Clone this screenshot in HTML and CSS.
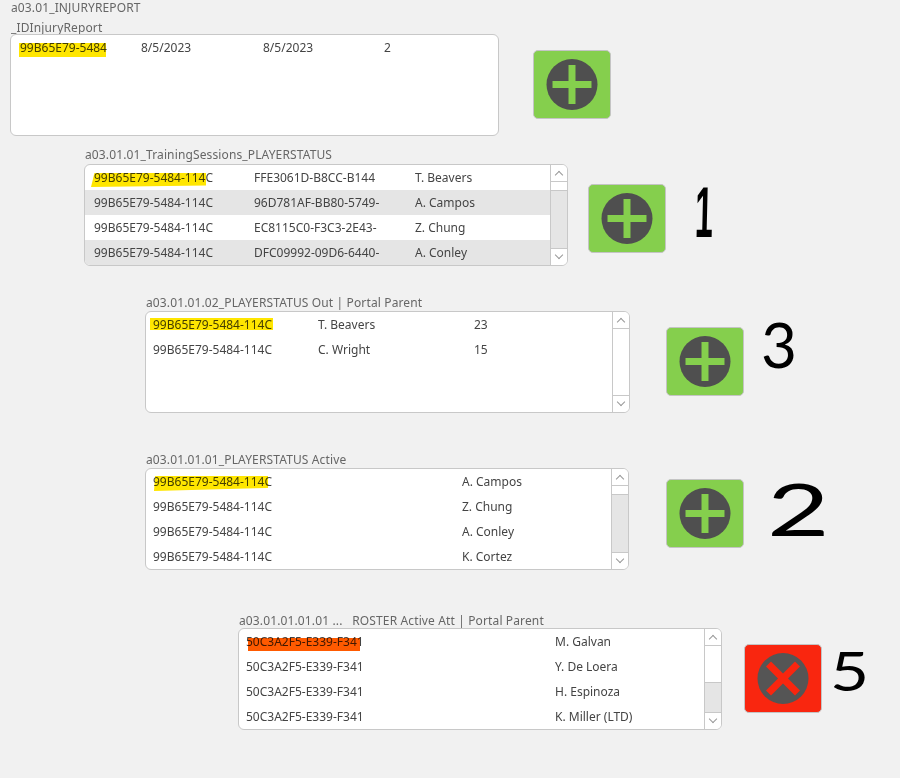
FILE: index.html
```html
<!DOCTYPE html>
<html lang="en">
<head>
    <meta charset="UTF-8">
    <title>a03.01_INJURYREPORT</title>
    <link rel="stylesheet" href="styles.css">
</head>
<body>

<section class="block block-report">
    <div class="label title">a03.01_INJURYREPORT</div>
    <div class="label">_IDInjuryReport</div>
    <div class="row">
        <div class="portal">
            <div class="rows cols-report">
                <div class="line">
                    <span class="cell"><i class="ink ink-report"></i>99B65E79-5484</span>
                    <span class="cell">8/5/2023</span>
                    <span class="cell">8/5/2023</span>
                    <span class="cell">2</span>
                </div>
            </div>
        </div>
        <button class="action add">
            <svg viewBox="0 0 78 69" width="78" height="69"><circle cx="39" cy="34.500" r="25.500" fill="#4f4f4f"/><path d="M35.500 15h7v16h16v7h-16v16h-7v-16h-16v-7h16z" fill="#85cf4d"/></svg>
        </button>
    </div>
</section>

<section class="block block-training">
    <div class="label">a03.01.01_TrainingSessions_PLAYERSTATUS</div>
    <div class="row">
        <div class="portal">
            <div class="rows cols-training striped">
                <div class="line">
                    <span class="cell"><i class="ink ink-training"></i>99B65E79-5484-114C</span>
                    <span class="cell">FFE3061D-B8CC-B144</span>
                    <span class="cell">T. Beavers</span>
                </div>
                <div class="line">
                    <span class="cell">99B65E79-5484-114C</span>
                    <span class="cell">96D781AF-BB80-5749-</span>
                    <span class="cell">A. Campos</span>
                </div>
                <div class="line">
                    <span class="cell">99B65E79-5484-114C</span>
                    <span class="cell">EC8115C0-F3C3-2E43-</span>
                    <span class="cell">Z. Chung</span>
                </div>
                <div class="line">
                    <span class="cell">99B65E79-5484-114C</span>
                    <span class="cell">DFC09992-09D6-6440-</span>
                    <span class="cell">A. Conley</span>
                </div>
            </div>
            <div class="scrollbar">
                <div class="arrow up"></div>
                <div class="thumb thumb-top"></div>
                <div class="track"></div>
                <div class="arrow down"></div>
            </div>
        </div>
        <button class="action add">
            <svg viewBox="0 0 78 69" width="78" height="69"><circle cx="39" cy="34.500" r="25.500" fill="#4f4f4f"/><path d="M35.500 15h7v16h16v7h-16v16h-7v-16h-16v-7h16z" fill="#85cf4d"/></svg>
        </button>
        <span class="note note-1">1</span>
    </div>
</section>

<section class="block block-out">
    <div class="label">a03.01.01.02_PLAYERSTATUS Out | Portal Parent</div>
    <div class="row">
        <div class="portal">
            <div class="rows cols-out">
                <div class="line">
                    <span class="cell"><i class="ink ink-out"></i>99B65E79-5484-114C</span>
                    <span class="cell">T. Beavers</span>
                    <span class="cell">23</span>
                </div>
                <div class="line">
                    <span class="cell">99B65E79-5484-114C</span>
                    <span class="cell">C. Wright</span>
                    <span class="cell">15</span>
                </div>
            </div>
            <div class="scrollbar">
                <div class="arrow up"></div>
                <div class="thumb thumb-fill"></div>
                <div class="arrow down"></div>
            </div>
        </div>
        <button class="action add">
            <svg viewBox="0 0 78 69" width="78" height="69"><circle cx="39" cy="34.500" r="25.500" fill="#4f4f4f"/><path d="M35.500 15h7v16h16v7h-16v16h-7v-16h-16v-7h16z" fill="#85cf4d"/></svg>
        </button>
        <span class="note note-3">3</span>
    </div>
</section>

<section class="block block-active">
    <div class="label">a03.01.01.01_PLAYERSTATUS Active</div>
    <div class="row">
        <div class="portal">
            <div class="rows cols-active">
                <div class="line">
                    <span class="cell"><i class="ink ink-active"></i>99B65E79-5484-114C</span>
                    <span class="cell">A. Campos</span>
                </div>
                <div class="line">
                    <span class="cell">99B65E79-5484-114C</span>
                    <span class="cell">Z. Chung</span>
                </div>
                <div class="line">
                    <span class="cell">99B65E79-5484-114C</span>
                    <span class="cell">A. Conley</span>
                </div>
                <div class="line">
                    <span class="cell">99B65E79-5484-114C</span>
                    <span class="cell">K. Cortez</span>
                </div>
            </div>
            <div class="scrollbar">
                <div class="arrow up"></div>
                <div class="thumb thumb-top"></div>
                <div class="track"></div>
                <div class="arrow down"></div>
            </div>
        </div>
        <button class="action add">
            <svg viewBox="0 0 78 69" width="78" height="69"><circle cx="39" cy="34.500" r="25.500" fill="#4f4f4f"/><path d="M35.500 15h7v16h16v7h-16v16h-7v-16h-16v-7h16z" fill="#85cf4d"/></svg>
        </button>
        <span class="note note-2">2</span>
    </div>
</section>

<section class="block block-roster">
    <div class="label">a03.01.01.01.01 ...&nbsp;&nbsp; ROSTER Active Att | Portal Parent</div>
    <div class="row">
        <div class="portal">
            <div class="rows cols-roster">
                <div class="line">
                    <span class="cell"><i class="ink ink-roster"></i>50C3A2F5-E339-F341</span>
                    <span class="cell">M. Galvan</span>
                </div>
                <div class="line">
                    <span class="cell">50C3A2F5-E339-F341</span>
                    <span class="cell">Y. De Loera</span>
                </div>
                <div class="line">
                    <span class="cell">50C3A2F5-E339-F341</span>
                    <span class="cell">H. Espinoza</span>
                </div>
                <div class="line">
                    <span class="cell">50C3A2F5-E339-F341</span>
                    <span class="cell">K. Miller (LTD)</span>
                </div>
            </div>
            <div class="scrollbar">
                <div class="arrow up"></div>
                <div class="thumb thumb-low"></div>
                <div class="track"></div>
                <div class="arrow down"></div>
            </div>
        </div>
        <button class="action remove">
            <svg viewBox="0 0 78 69" width="78" height="69"><circle cx="39" cy="34.500" r="25.500" fill="#555555"/><path d="M39 29.500l12-12 5 5-12 12 12 12-5 5-12-12-12 12-5-5 12-12-12-12 5-5z" fill="#f9260f"/></svg>
        </button>
        <span class="note note-5">5</span>
    </div>
</section>

</body>
</html>
```

FILE: styles.css
```css
body {
    font-family: "Noto Sans", "Liberation Sans", sans-serif;
    font-size: 12px;
    background-color: #f1f1f1;
    color: #444;
    margin: 0;
    padding: 0;
}

.label {
    color: #666;
    height: 14px;
    line-height: 16px;
    letter-spacing: 0.13px;
    margin-left: 1px;
}
.title {
    margin-bottom: 6px;
}

/* each block sits at its own indent on the layout */
.block-report {
    margin-left: 10px;
}
.block-training {
    margin: 11px 0 0 84px;
}
.block-training .label {
    margin-bottom: 3px;
}
.block-out {
    margin: 29px 0 0 145px;
}
.block-out .label {
    margin-bottom: 2px;
}
.block-active {
    margin: 39px 0 0 145px;
}
.block-active .label {
    margin-bottom: 2px;
}
.block-roster {
    margin: 43px 0 0 238px;
}
.block-roster .label {
    margin-bottom: 1px;
}

.row {
    display: flex;
    align-items: flex-start;
    position: relative;
}

.portal {
    display: flex;
    box-sizing: border-box;
    width: 485px;
    height: 102px;
    background-color: #fff;
    border: 1px solid #c8c8c8;
    border-radius: 6px;
    overflow: hidden;
}
.block-report .portal {
    width: 489px;
}
.block-training .portal,
.block-active .portal,
.block-roster .portal {
    width: 484px;
}

.rows {
    flex: 1;
}
.line {
    display: grid;
    height: 25px;
    line-height: 25px;
    white-space: nowrap;
}
.striped .line:nth-child(even) {
    background-color: #e5e5e5;
}
.cell {
    position: relative;
}

.cols-report .line {
    grid-template-columns: 121px 122px 121px 1fr;
    padding-left: 9px;
}
.cols-training .line {
    grid-template-columns: 160px 161px 1fr;
    padding-left: 9px;
}
.cols-out .line {
    grid-template-columns: 165px 156px 1fr;
    padding-left: 7px;
}
.cols-active .line {
    grid-template-columns: 309px 1fr;
    padding-left: 7px;
}
.cols-roster .line {
    grid-template-columns: 309px 1fr;
    padding-left: 7px;
}

/* marker strokes drawn on top of the first row */
.ink {
    position: absolute;
    mix-blend-mode: multiply;
}
.ink-report {
    left: -1px;
    top: 8px;
    width: 87px;
    height: 14px;
    background-color: #ffe600;
}
.ink-training {
    left: -3px;
    top: 8px;
    width: 115px;
    height: 14px;
    background-color: #ffe600;
    clip-path: polygon(3% 0, 100% 0, 100% 90%, 0 100%);
}
.ink-out {
    left: -3px;
    top: 6px;
    width: 123px;
    height: 12px;
    background-color: #ffe600;
}
.ink-active {
    left: 1px;
    top: 7px;
    width: 114px;
    height: 15px;
    background-color: #ffe600;
    clip-path: polygon(1% 0, 100% 0, 100% 80%, 0 100%);
}
.ink-roster {
    left: 2px;
    top: 9px;
    width: 112px;
    height: 13px;
    background-color: #ff5a00;
}

.scrollbar {
    display: flex;
    flex-direction: column;
    flex: none;
    width: 16px;
    border-left: 1px solid #c8c8c8;
}
.arrow {
    flex: none;
    height: 16px;
    display: flex;
    align-items: center;
    justify-content: center;
    background-color: #fff;
}
.arrow::before {
    content: "";
    width: 5px;
    height: 5px;
    border-left: 1px solid #999;
    border-top: 1px solid #999;
}
.arrow.up {
    border-bottom: 1px solid #c8c8c8;
}
.arrow.up::before {
    transform: translateY(2px) rotate(45deg);
}
.arrow.down {
    border-top: 1px solid #c8c8c8;
}
.arrow.down::before {
    transform: translateY(-2px) rotate(225deg);
}
.thumb {
    background-color: #fff;
}
.thumb-top {
    height: 8px;
    border-bottom: 1px solid #c8c8c8;
}
.thumb-fill {
    flex: 1;
}
.thumb-low {
    height: 36px;
    border-bottom: 1px solid #c8c8c8;
}
.track {
    flex: 1;
    background-color: #e5e5e5;
}

.action {
    flex: none;
    box-sizing: border-box;
    width: 78px;
    height: 69px;
    padding: 0;
    border: 1px solid #c4c4c4;
    border-radius: 5px;
    overflow: hidden;
}
.action svg {
    display: block;
    margin: -1px;
}
.add {
    background-color: #85cf4d;
}
.remove {
    background-color: #f9260f;
}
.block-report .action {
    margin: 16px 0 0 34px;
}
.block-training .action {
    margin: 20px 0 0 20px;
}
.block-out .action {
    margin: 16px 0 0 36px;
}
.block-active .action {
    margin: 11px 0 0 37px;
}
.block-roster .action {
    margin: 16px 0 0 22px;
}

/* hand written order numbers next to the buttons */
.note {
    position: absolute;
    font-family: "Lato", sans-serif;
    color: #000;
    line-height: 1;
}
.note-1 {
    left: 612px;
    top: 12px;
    font-family: "Liberation Sans", sans-serif;
    font-size: 72px;
    font-weight: bold;
    transform: scaleX(0.45) skewX(-3deg);
    transform-origin: left top;
}
.note-3 {
    left: 616px;
    top: 2px;
    font-size: 62px;
}
.note-2 {
    left: 622px;
    top: 4px;
    font-size: 72px;
    transform: scaleX(1.5);
    transform-origin: left top;
}
.note-5 {
    left: 592px;
    top: 16px;
    font-size: 54px;
    transform: scaleX(1.25);
    transform-origin: left top;
}
```
